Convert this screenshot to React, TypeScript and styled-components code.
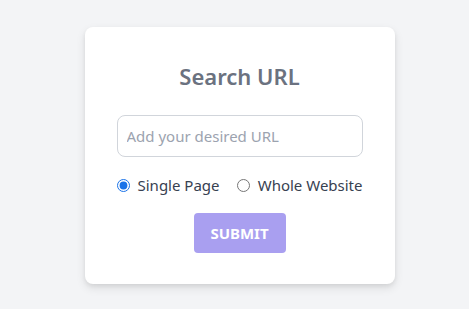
import React, { useState } from "react"
import styled, { createGlobalStyle } from "styled-components"

const GlobalStyle = createGlobalStyle`
  html, body {
    margin: 0;
    padding: 0;
    background: #f3f4f6;
    font-family: "Segoe UI", "Noto Sans", "Open Sans", sans-serif;
  }
`

const Page = styled.div`
  display: flex;
  justify-content: center;
  padding: 27px 0 0 10px;
  min-height: 309px;
  box-sizing: border-box;
`

const Card = styled.form`
  width: 310px;
  height: 257px;
  box-sizing: border-box;
  background: #ffffff;
  border-radius: 8px;
  box-shadow: 0 4px 10px rgba(0, 0, 0, 0.1), 0 2px 4px rgba(0, 0, 0, 0.06);
  display: flex;
  flex-direction: column;
  align-items: center;
  padding: 34px 32px 0;
`

const Title = styled.h2`
  margin: 0;
  font-size: 22px;
  font-weight: 600;
  color: #6b7280;
  line-height: 30px;
`

const UrlInput = styled.input`
  margin-top: 24px;
  width: 246px;
  height: 42px;
  box-sizing: border-box;
  border: 1px solid #d1d5db;
  border-radius: 8px;
  padding: 0 9px;
  font-family: inherit;
  font-size: 15px;
  color: #374151;
  outline: none;

  &::placeholder {
    color: #9ca3af;
  }
`

const RadioRow = styled.div`
  margin-top: 18px;
  width: 246px;
  display: flex;
  justify-content: space-between;
  align-items: center;
`

const RadioLabel = styled.label`
  display: flex;
  align-items: center;
  gap: 8px;
  font-size: 15px;
  color: #374151;
  cursor: pointer;
`

const Radio = styled.input`
  margin: 0;
  width: 13px;
  height: 13px;
  accent-color: #1a73e8;
`

const SubmitButton = styled.button`
  margin-top: 18px;
  width: 92px;
  height: 40px;
  border: none;
  border-radius: 4px;
  background: #a99ff0;
  color: #ffffff;
  font-family: inherit;
  font-size: 15px;
  font-weight: 700;
  cursor: pointer;
`

export default function App() {
  const [mode, setMode] = useState("single")

  return (
    <>
      <GlobalStyle />
      <Page>
        <Card onSubmit={(e) => e.preventDefault()}>
          <Title>Search URL</Title>
          <UrlInput type="text" placeholder="Add your desired URL" />
          <RadioRow>
            <RadioLabel>
              <Radio
                type="radio"
                name="mode"
                checked={mode === "single"}
                onChange={() => setMode("single")}
              />
              Single Page
            </RadioLabel>
            <RadioLabel>
              <Radio
                type="radio"
                name="mode"
                checked={mode === "whole"}
                onChange={() => setMode("whole")}
              />
              Whole Website
            </RadioLabel>
          </RadioRow>
          <SubmitButton type="submit">SUBMIT</SubmitButton>
        </Card>
      </Page>
    </>
  )
}
